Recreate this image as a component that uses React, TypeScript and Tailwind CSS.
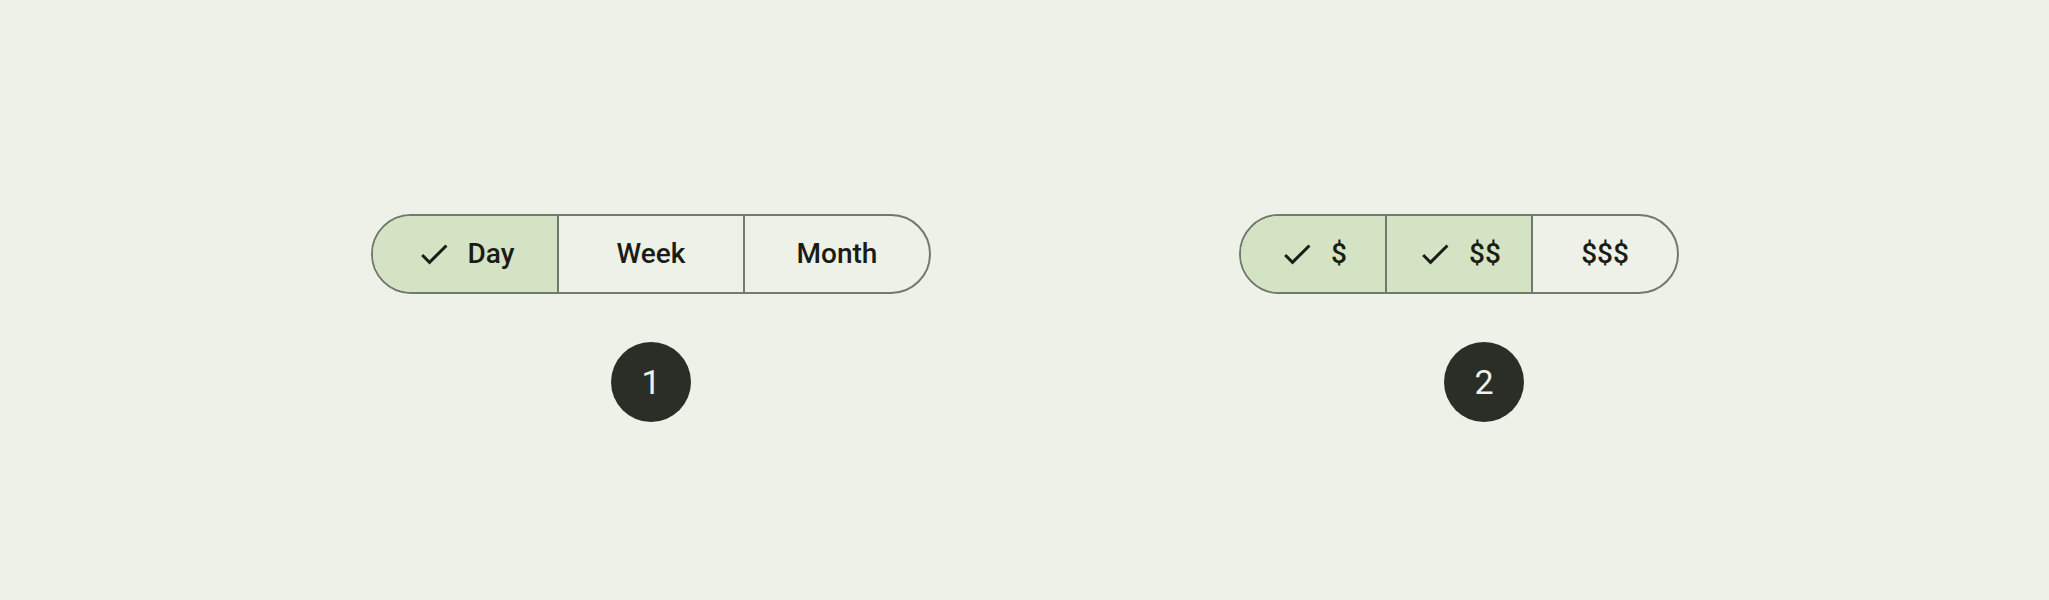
import React from "react";

function Check() {
  return (
    <svg width="36" height="36" viewBox="0 0 24 24" className="shrink-0">
      <path d="M9 16.17L4.83 12l-1.42 1.41L9 19 21 7l-1.41-1.41z" fill="#1a1c16" />
    </svg>
  );
}

function Segment({ label, selected, first }: { label: string; selected: boolean; first?: boolean }) {
  return (
    <div
      className={`flex-1 h-full flex items-center justify-center gap-[16px] ${first ? "" : "border-l-2 border-[#72786b]"} ${selected ? "bg-[#d5e3c5]" : ""}`}
    >
      {selected && <Check />}
      <span className="text-[28px] font-medium text-[#1a1c16] leading-none">{label}</span>
    </div>
  );
}

function Group({ items, width }: { items: { label: string; selected: boolean }[]; width: string }) {
  return (
    <div className={`${width} h-[80px] flex rounded-full border-2 border-[#72786b] overflow-hidden`}>
      {items.map((it, i) => (
        <Segment key={it.label} label={it.label} selected={it.selected} first={i === 0} />
      ))}
    </div>
  );
}

function Badge({ n }: { n: string }) {
  return (
    <div className="w-[80px] h-[80px] rounded-full bg-[#2b2e27] flex items-center justify-center">
      <span className="text-[34px] text-[#f0f1ea] leading-none">{n}</span>
    </div>
  );
}

export default function App() {
  return (
    <div
      className="w-[2049px] h-[600px] bg-[#eef1e7] flex items-start pt-[214px] pl-[371px]"
      style={{ fontFamily: "Roboto, 'Noto Sans', sans-serif" }}
    >
      <div className="flex flex-col items-center gap-[48px]">
        <Group
          width="w-[560px]"
          items={[
            { label: "Day", selected: true },
            { label: "Week", selected: false },
            { label: "Month", selected: false },
          ]}
        />
        <Badge n="1" />
      </div>
      <div className="ml-[308px] flex flex-col items-start gap-[48px]">
        <Group
          width="w-[440px]"
          items={[
            { label: "$", selected: true },
            { label: "$$", selected: true },
            { label: "$$$", selected: false },
          ]}
        />
        <div className="ml-[205px]">
          <Badge n="2" />
        </div>
      </div>
    </div>
  );
}
